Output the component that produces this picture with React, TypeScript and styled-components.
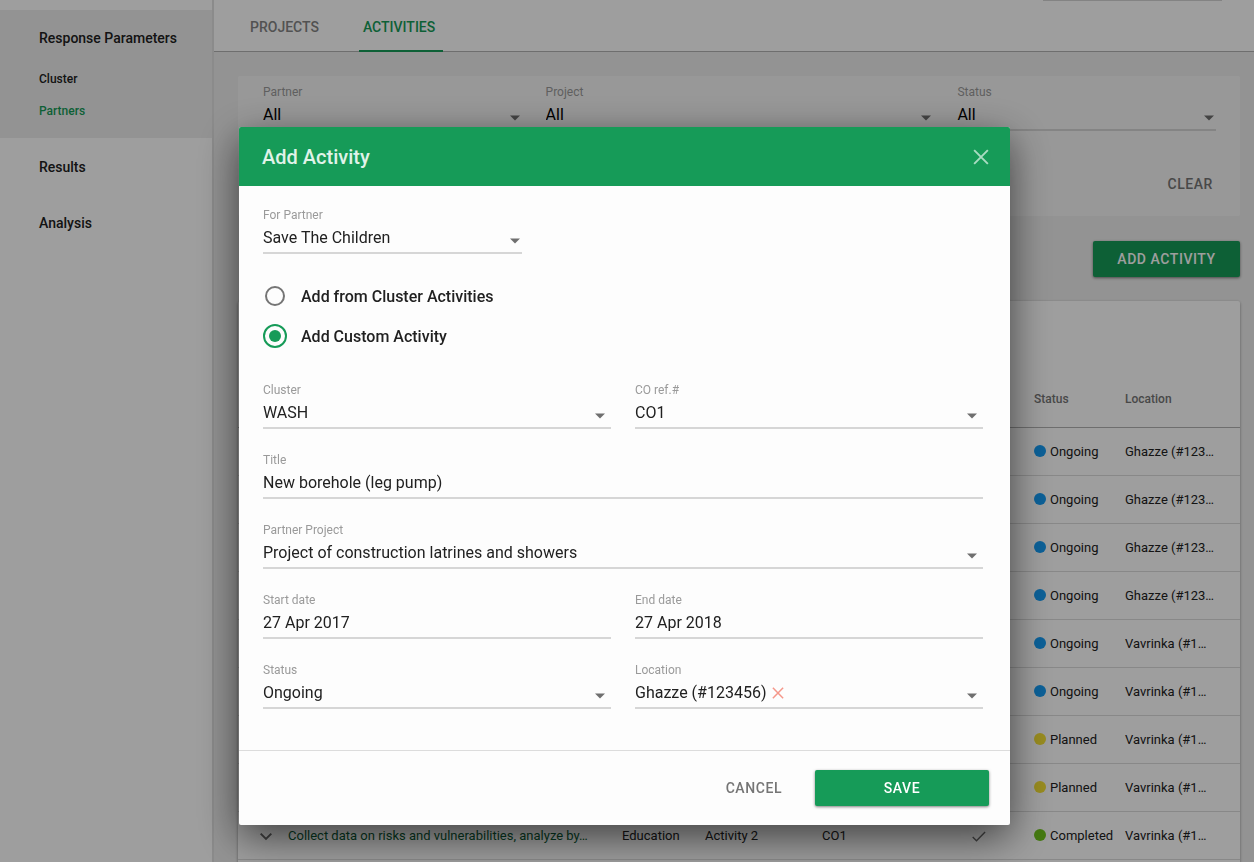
import React, { useId, useState } from "react";
import styled, { createGlobalStyle } from "styled-components";

const GREEN = "#169b58";

const GlobalStyle = createGlobalStyle`
  *, *::before, *::after { box-sizing: border-box; }
  html, body, #root { height: 100%; }
  body {
    margin: 0;
    overflow: hidden;
    background: #eeeeee;
    color: #212121;
    font-family: Roboto, "Liberation Sans", sans-serif;
    font-size: 13px;
  }
  button, input, select { font: inherit; color: inherit; }
`;

/* ---------- page ---------- */

const Page = styled.div`
  display: flex;
  height: 100vh;
  overflow: hidden;
`;

const Sidebar = styled.nav`
  flex: none;
  width: 214px;
  padding-top: 10px;
  background: #ffffff;
  border-right: 2px solid #e0e0e0;
`;

const NavSection = styled.div<{ $open?: boolean }>`
  margin-bottom: ${(p) => (p.$open ? 1 : 0)}px;
  padding-bottom: ${(p) => (p.$open ? 14 : 0)}px;
  background: ${(p) => (p.$open ? "#eeeeee" : "transparent")};
`;

const NavItem = styled.a`
  display: block;
  padding-left: 39px;
  color: #212121;
  font-size: 14px;
  font-weight: 500;
  line-height: 56px;
  text-decoration: none;
`;

const SubNav = styled.div`
  display: grid;
  gap: 6px;
`;

const SubItem = styled.a<{ $active?: boolean }>`
  padding-left: 39px;
  color: ${(p) => (p.$active ? GREEN : "#212121")};
  font-size: 12px;
  font-weight: 500;
  line-height: 26px;
  text-decoration: none;
`;

const Main = styled.main`
  flex: 1;
  min-width: 0;
`;

const TopBar = styled.header`
  display: flex;
  justify-content: space-between;
  height: 52px;
  padding: 0 32px;
  background: #ffffff;
  border-bottom: 1px solid #b2b2b2;
`;

const Tabs = styled.div`
  display: flex;
  gap: 32px;
  height: 52px;
`;

const Tab = styled.button<{ $active?: boolean }>`
  padding: 4px 8px 0 4px;
  background: none;
  border: 0;
  border-bottom: 2px solid ${(p) => (p.$active ? GREEN : "transparent")};
  color: ${(p) => (p.$active ? GREEN : "#858585")};
  font-size: 14px;
  font-weight: 500;
`;

const HeaderRule = styled.div`
  width: 179px;
  border-top: 1px solid #d4d4d4;
`;

const Content = styled.div`
  padding: 24px 14px 0 24px;
`;

const FilterCard = styled.section`
  padding: 5px 24px 14px 25px;
  background: #f6f6f6;
  border-radius: 2px;
  color: #000000;
`;

const FilterGrid = styled.div`
  display: grid;
  grid-template-columns: 2fr 3fr 2fr;
  gap: 24px;
`;

const FilterActions = styled.div`
  display: flex;
  justify-content: flex-end;
  padding-top: 35px;
`;

const Actions = styled.div`
  display: flex;
  justify-content: flex-end;
  padding: 25px 0 24px;
`;

const SolidButton = styled.button<{ $width: number }>`
  width: ${(p) => p.$width}px;
  height: 36px;
  padding: 0;
  background: ${GREEN};
  border: 0;
  border-radius: 2px;
  box-shadow: 0 1px 3px rgba(0, 0, 0, 0.5);
  color: #ffffff;
  font-size: 14px;
  font-weight: 500;
  letter-spacing: 0.04em;
`;

const FlatButton = styled.button`
  height: 36px;
  padding: 0 3px;
  background: none;
  border: 0;
  color: #757575;
  font-size: 14px;
  font-weight: 500;
  letter-spacing: 0.04em;
`;

/* ---------- table ---------- */

const TableCard = styled.section`
  padding-top: 70px;
  background: #ffffff;
  border-radius: 2px;
  box-shadow: 0 1px 3px rgba(0, 0, 0, 0.4);
`;

const Table = styled.table`
  width: 100%;
  table-layout: fixed;
  border-collapse: collapse;
`;

const HeadCell = styled.th`
  height: 56px;
  padding: 0;
  border-bottom: 1px solid #b2b2b2;
  color: #757575;
  font-size: 12px;
  font-weight: 500;
  text-align: left;
`;

const Cell = styled.td<{ $link?: boolean; $indent?: number }>`
  height: 48px;
  padding: 0 0 0 ${(p) => p.$indent ?? 0}px;
  border-bottom: 1px solid #dcdcdc;
  color: ${(p) => (p.$link ? "#0a5a34" : "#212121")};
  font-size: 13px;
  white-space: nowrap;

  svg { display: inline-block; vertical-align: middle; }
`;

const StatusLabel = styled.span<{ $color: string }>`
  display: flex;
  align-items: center;
  gap: 4px;

  &::before {
    content: "";
    width: 12px;
    height: 12px;
    border-radius: 50%;
    background: ${(p) => p.$color};
  }
`;

/* ---------- form fields ---------- */

const FieldBox = styled.div<{ $wide?: boolean }>`
  grid-column: ${(p) => (p.$wide ? "1 / -1" : "auto")};
  min-width: 0;
`;

const Label = styled.label`
  display: block;
  color: #9a9a9a;
  font-size: 12px;
  line-height: 23px;
`;

const Control = styled.div`
  display: flex;
  align-items: center;
  height: 27px;
  padding-bottom: 4px;
  border-bottom: 2px solid #d6d6d6;
  font-size: 16px;
`;

const SelectWrap = styled.div`
  flex: 1;
  display: grid;
  align-items: center;
  min-width: 0;

  & > * { grid-area: 1 / 1; }
`;

const Select = styled.select`
  width: 100%;
  height: 24px;
  padding: 0 24px 0 0;
  appearance: none;
  background: none;
  border: 0;
  outline: 0;
`;

const Arrow = styled.svg<{ $inset: number }>`
  justify-self: end;
  margin: 6px ${(p) => p.$inset}px 0 0;
  pointer-events: none;
`;

const TextInput = styled.input`
  width: 100%;
  height: 24px;
  padding: 0;
  background: none;
  border: 0;
  outline: 0;
`;

const IconButton = styled.button`
  display: grid;
  place-items: center;
  padding: 4px;
  background: none;
  border: 0;
`;

const Tag = styled.span`
  margin-right: 2px;
`;

/* ---------- dialog ---------- */

const Backdrop = styled.div`
  position: fixed;
  inset: 0;
  display: flex;
  align-items: flex-start;
  justify-content: center;
  padding: 127px 5px 0 0;
  background: rgba(0, 0, 0, 0.38);
`;

const Dialog = styled.section`
  width: 100%;
  max-width: 771px;
  overflow: hidden;
  background: #fdfdfd;
  border-radius: 2px;
  box-shadow: 0 12px 40px rgba(0, 0, 0, 0.6);
`;

const DialogHeader = styled.header`
  display: flex;
  align-items: center;
  justify-content: space-between;
  height: 59px;
  padding: 0 17px 0 23px;
  background: ${GREEN};
`;

const DialogTitle = styled.h2`
  margin: 0;
  color: #e0f3e9;
  font-size: 20px;
  font-weight: 500;
  line-height: 28px;
`;

const DialogBody = styled.div`
  padding: 18px 27px 41px 24px;
`;

const PartnerField = styled.div`
  width: 259px;
`;

const RadioGroup = styled.div`
  margin: 22px 0 23px;
`;

const RadioRow = styled.label`
  display: flex;
  align-items: center;
  gap: 14px;
  height: 40px;
  font-size: 16px;
  font-weight: 500;
`;

const Radio = styled.input`
  appearance: none;
  display: grid;
  place-items: center;
  width: 20px;
  height: 20px;
  margin: 2px;
  border: 2px solid #757575;
  border-radius: 50%;

  &:checked {
    width: 24px;
    height: 24px;
    margin: 0;
    border-color: ${GREEN};
  }

  &:checked::before {
    content: "";
    width: 12px;
    height: 12px;
    border-radius: 50%;
    background: ${GREEN};
  }
`;

const FormGrid = styled.div`
  display: grid;
  grid-template-columns: 1fr 1fr;
  gap: 20px 24px;
`;

const DialogFooter = styled.footer`
  display: flex;
  justify-content: flex-end;
  gap: 30px;
  padding: 19px 21px;
  border-top: 1px solid #dcdcdc;
`;

/* ---------- parts ---------- */

const DropArrow = ({ inset }: { inset: number }) => (
  <Arrow $inset={inset} width="12" height="6" viewBox="0 0 12 6" aria-hidden="true">
    <path d="M1 0.5h10L6 5.5z" fill="#6f6f6f" />
  </Arrow>
);

const Cross = ({ size, color }: { size: number; color: string }) => (
  <svg width={size} height={size} viewBox="0 0 14 14" aria-hidden="true">
    <path d="M1 1l12 12M13 1L1 13" stroke={color} strokeWidth="1.7" fill="none" />
  </svg>
);

interface FieldProps {
  label: string;
  value: string;
  wide?: boolean;
  compact?: boolean;
}

function SelectField({ label, value, wide, compact }: FieldProps) {
  const id = useId();
  return (
    <FieldBox $wide={wide}>
      <Label htmlFor={id}>{label}</Label>
      <Control>
        <SelectWrap>
          <Select id={id} defaultValue={value}>
            <option>{value}</option>
          </Select>
          <DropArrow inset={compact ? 1 : 5} />
        </SelectWrap>
      </Control>
    </FieldBox>
  );
}

function TextField({ label, value, wide }: FieldProps) {
  const id = useId();
  return (
    <FieldBox $wide={wide}>
      <Label htmlFor={id}>{label}</Label>
      <Control>
        <TextInput id={id} type="text" defaultValue={value} />
      </Control>
    </FieldBox>
  );
}

function TagField({ label, value }: FieldProps) {
  const id = useId();
  return (
    <FieldBox>
      <Label htmlFor={id}>{label}</Label>
      <Control>
        <Tag>{value}</Tag>
        <IconButton type="button" aria-label={`Remove ${value}`}>
          <Cross size={12} color="#f5978a" />
        </IconButton>
        <SelectWrap>
          <Select id={id} defaultValue="">
            <option value="" />
          </Select>
          <DropArrow inset={5} />
        </SelectWrap>
      </Control>
    </FieldBox>
  );
}

const STATUS_COLORS: Record<string, string> = {
  Ongoing: "#149cf5",
  Planned: "#f5e134",
  Completed: "#6fc41c",
};

interface Row {
  title?: string;
  cluster?: string;
  activity?: string;
  ref?: string;
  status: string;
  location: string;
}

const COLLECT_DATA: Row = {
  title: "Collect data on risks and vulnerabilities, analyze by…",
  cluster: "Education",
  activity: "Activity 2",
  ref: "CO1",
  status: "Completed",
  location: "Vavrinka (#1…",
};

const ROWS: Row[] = [
  { status: "Ongoing", location: "Ghazze (#123…" },
  { status: "Ongoing", location: "Ghazze (#123…" },
  { status: "Ongoing", location: "Ghazze (#123…" },
  { status: "Ongoing", location: "Ghazze (#123…" },
  { status: "Ongoing", location: "Vavrinka (#1…" },
  { status: "Ongoing", location: "Vavrinka (#1…" },
  { status: "Planned", location: "Vavrinka (#1…" },
  { status: "Planned", location: "Vavrinka (#1…" },
  COLLECT_DATA,
];

function ActivityTable() {
  return (
    <Table>
      <colgroup>
        <col width="50" />
        <col />
        <col width="83" />
        <col width="117" />
        <col width="129" />
        <col width="56" />
        <col width="27" />
        <col width="91" />
        <col width="115" />
      </colgroup>
      <thead>
        <tr>
          <HeadCell colSpan={7} />
          <HeadCell scope="col">Status</HeadCell>
          <HeadCell scope="col">Location</HeadCell>
        </tr>
      </thead>
      <tbody>
        {ROWS.map((row, i) => (
          <tr key={i}>
            <Cell $indent={21}>
              {row.title && (
                <svg width="14" height="9" viewBox="0 0 14 9" aria-hidden="true">
                  <path d="M1.7 1.6L7 6.9l5.3-5.3" stroke="#6a6a6a" strokeWidth="2" fill="none" />
                </svg>
              )}
            </Cell>
            <Cell $link>{row.title}</Cell>
            <Cell>{row.cluster}</Cell>
            <Cell>{row.activity}</Cell>
            <Cell>{row.ref}</Cell>
            <Cell $indent={21}>
              {row.title && (
                <svg width="14" height="11" viewBox="0 0 14 11" aria-hidden="true">
                  <path d="M0.7 5.9l3.8 3.8 8.6-8.8" stroke="#6a6a6a" strokeWidth="1.4" fill="none" />
                </svg>
              )}
            </Cell>
            <Cell />
            <Cell>
              <StatusLabel $color={STATUS_COLORS[row.status]}>{row.status}</StatusLabel>
            </Cell>
            <Cell>{row.location}</Cell>
          </tr>
        ))}
        <tr>
          <Cell colSpan={9} />
        </tr>
      </tbody>
    </Table>
  );
}

function AddActivityDialog() {
  const [source, setSource] = useState("custom");
  return (
    <Backdrop>
      <Dialog role="dialog" aria-modal="true" aria-labelledby="dialog-title">
        <DialogHeader>
          <DialogTitle id="dialog-title">Add Activity</DialogTitle>
          <IconButton type="button" aria-label="Close">
            <Cross size={16} color="#a9dcc2" />
          </IconButton>
        </DialogHeader>
        <DialogBody>
          <PartnerField>
            <SelectField label="For Partner" value="Save The Children" compact />
          </PartnerField>
          <RadioGroup role="radiogroup" aria-label="Activity source">
            <RadioRow>
              <Radio type="radio" name="source" checked={source === "cluster"} onChange={() => setSource("cluster")} />
              Add from Cluster Activities
            </RadioRow>
            <RadioRow>
              <Radio type="radio" name="source" checked={source === "custom"} onChange={() => setSource("custom")} />
              Add Custom Activity
            </RadioRow>
          </RadioGroup>
          <FormGrid>
            <SelectField label="Cluster" value="WASH" />
            <SelectField label="CO ref.#" value="CO1" />
            <TextField label="Title" value="New borehole (leg pump)" wide />
            <SelectField label="Partner Project" value="Project of construction latrines and showers" wide />
            <TextField label="Start date" value="27 Apr 2017" />
            <TextField label="End date" value="27 Apr 2018" />
            <SelectField label="Status" value="Ongoing" />
            <TagField label="Location" value="Ghazze (#123456)" />
          </FormGrid>
        </DialogBody>
        <DialogFooter>
          <FlatButton type="button">CANCEL</FlatButton>
          <SolidButton type="button" $width={174}>SAVE</SolidButton>
        </DialogFooter>
      </Dialog>
    </Backdrop>
  );
}

export default function App() {
  return (
    <>
      <GlobalStyle />
      <Page>
        <Sidebar>
          <NavSection $open>
            <NavItem href="#parameters">Response Parameters</NavItem>
            <SubNav>
              <SubItem href="#cluster">Cluster</SubItem>
              <SubItem href="#partners" $active>Partners</SubItem>
            </SubNav>
          </NavSection>
          <NavSection>
            <NavItem href="#results">Results</NavItem>
          </NavSection>
          <NavSection>
            <NavItem href="#analysis">Analysis</NavItem>
          </NavSection>
        </Sidebar>
        <Main>
          <TopBar>
            <Tabs>
              <Tab type="button">PROJECTS</Tab>
              <Tab type="button" $active>ACTIVITIES</Tab>
            </Tabs>
            <HeaderRule />
          </TopBar>
          <Content>
            <FilterCard>
              <FilterGrid>
                <SelectField label="Partner" value="All" compact />
                <SelectField label="Project" value="All" compact />
                <SelectField label="Status" value="All" compact />
              </FilterGrid>
              <FilterActions>
                <FlatButton type="button">CLEAR</FlatButton>
              </FilterActions>
            </FilterCard>
            <Actions>
              <SolidButton type="button" $width={147}>ADD ACTIVITY</SolidButton>
            </Actions>
            <TableCard>
              <ActivityTable />
            </TableCard>
          </Content>
        </Main>
      </Page>
      <AddActivityDialog />
    </>
  );
}
